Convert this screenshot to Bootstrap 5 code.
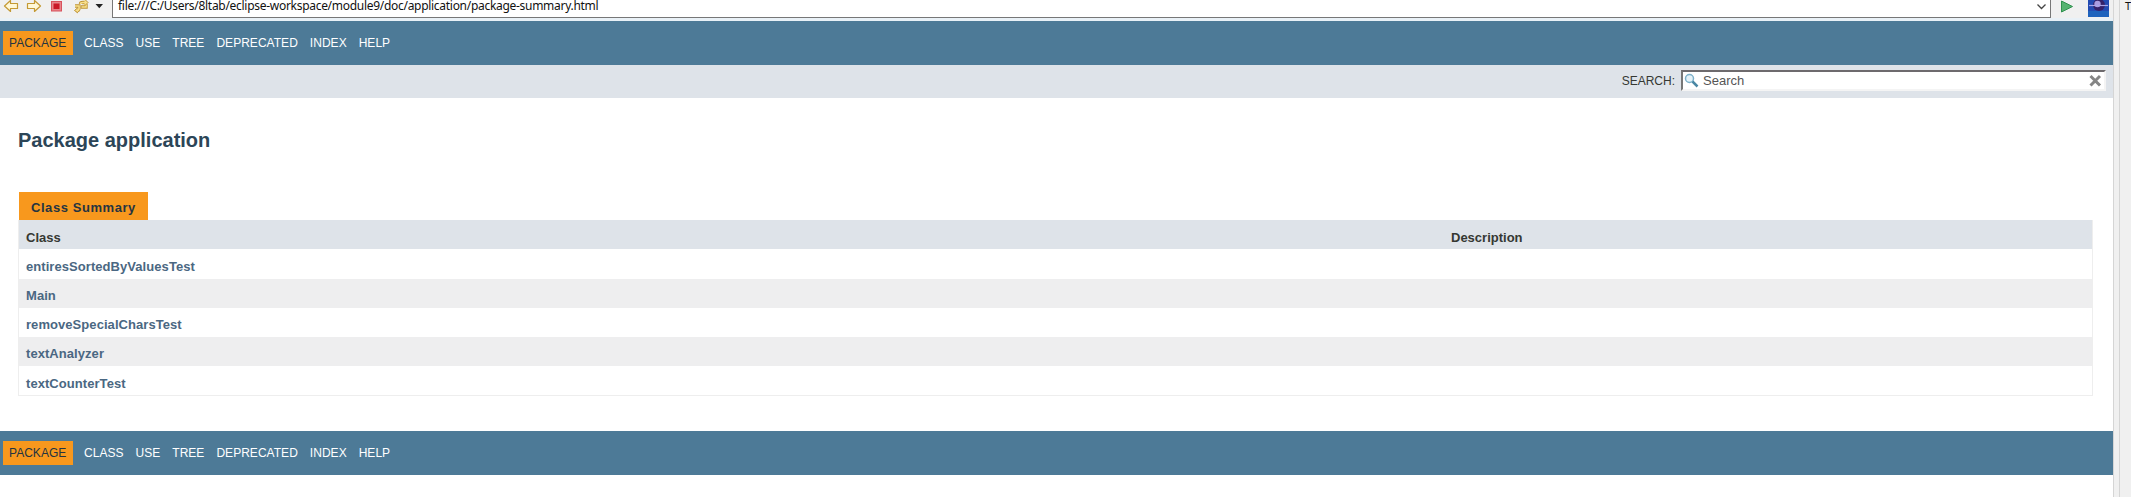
<!DOCTYPE html>
<html lang="en">
<head>
<meta charset="utf-8">
<title>Package application</title>
<link href="https://cdn.jsdelivr.net/npm/bootstrap@5.3.0/dist/css/bootstrap.min.css" rel="stylesheet">
<style>
body{font-family:"Liberation Sans",sans-serif;font-size:13px;line-height:15px;color:#353833;height:497px;overflow:hidden;background:#fff}
.page-col{width:2113px;height:497px}
.toolbar{height:21px;background:#f0f0f0;border-bottom:3px solid #e9f1f7}
.toolbar svg{display:block;flex:none}
.addr{width:1939px;height:18px;margin-left:8px;background:#fff;border:1px solid #777;border-top:0;padding-left:5px;font:12px/12px "Noto Sans",sans-serif;color:#111}
.addr span{letter-spacing:-.245px}
.addr span{letter-spacing:-.29px}
.bar{height:44px;background:#4d7a97;color:#fff;font-size:12px;line-height:14px;padding:10px 0 0 3px}
.bar a{color:#fff;text-decoration:none;padding:5px 0;margin-right:12px;letter-spacing:.03px}
.bar a.current{background:#f8981d;color:#253441;padding:5px 6px;margin-right:11px;width:70px}
.sub{height:33px;background:#dee3e9;font-size:12px;padding:5px 7px 0 0}
.find{width:425px;height:21px;margin-left:6px;background:#fff;border:2px solid #f4f4f4;border-top-color:#6d6a6d;border-left-color:#777;color:#555;font-size:13px}
h1{font-size:20px;line-height:24px;font-weight:700;color:#2c4557;margin:30px 0 0 18px}
.summary{margin:40px 20px 0 18px}
.tab-label{width:129px;height:28px;margin-left:1px;background:#f8981d;color:#253441;font-weight:700;letter-spacing:.56px;padding:8px 0 0 12px}
table.classes{width:2075px;height:176px;border:1px solid #eee;border-top:0;table-layout:fixed;margin:0;border-collapse:separate;border-spacing:0}
.classes th,.classes td{padding:10px 0 0 7px;vertical-align:top;font-weight:700;height:29px;line-height:15px}
.classes th{background:#dee3e9}
.classes .tall td{height:30px}
.classes a{color:#4a6782;text-decoration:none;letter-spacing:.06px}
.classes .alt{background:#eeeeef}
.classes .alt td,.classes .mid td{padding-top:9px}
.side{width:18px;background:#f0f0f0;border-left:1px solid #d5d5d5;overflow:hidden}
.side div{width:12px;height:497px;margin-left:5px;border-left:1px solid #d5d5d5;padding-left:5px;font:11px/12px "Noto Sans",sans-serif;color:#111}
</style>
</head>
<body>
<div class="d-flex">
<main class="page-col flex-shrink-0">
  <div class="toolbar d-flex">
    <svg width="104" height="18" viewBox="0 0 104 18">
      <g fill="#fff8d8" stroke="#c49a35" stroke-width="1.2" stroke-linejoin="round">
        <path d="M4.500 6L10.500 .5V3.500H17.500V8.500H10.500V11.500Z"/>
        <path d="M40.500 6L34.500 .5V3.500H27.500V8.500H34.500V11.500Z"/>
      </g>
      <rect x="51.500" y="1.500" width="10" height="9.500" fill="#e8848a" stroke="#d8525c"/>
      <rect x="53.500" y="3.500" width="6" height="5.500" fill="#c91827"/>
      <g fill="none" stroke="#bf9436" stroke-width="3.400">
        <path d="M86 2.500H83Q80.500 2.500 80.500 4"/><path d="M76 10.500H77.500Q79.500 10 79 6H75"/><path d="M81 7H86V4"/>
      </g>
      <g fill="none" stroke="#f8df8b" stroke-width="1.600">
        <path d="M86 2.500H83Q80.500 2.500 80.500 4"/><path d="M76 10.500H77.500Q79.500 10 79 6H75"/><path d="M81.500 7H86V4"/>
      </g>
      <path d="M84.500 -1L88 2.500L84.500 6M77.500 8L74.500 10.500L78 13" fill="#f8df8b" stroke="#bf9436"/>
      <path d="M95.500 4H103L99.300 8.300Z" fill="#222"/>
    </svg>
    <div class="addr d-flex justify-content-between flex-shrink-0"><span>file:///C:/Users/8ltab/eclipse-workspace/module9/doc/application/package-summary.html</span>
      <svg width="14" height="14" viewBox="0 0 14 14"><path d="M1.500 4.500L5.500 8.500L9.500 4.500" fill="none" stroke="#444" stroke-width="1.300"/></svg>
    </div>
    <svg class="ms-auto" width="62" height="18" viewBox="2051 0 62 18">
      <path d="M2061.500 1L2072.500 6.500L2061.500 12Z" fill="#56b370" stroke="#2f914e"/>
      <path d="M2088 0H2109V17H2088Z" fill="#224bb2"/><path d="M2088 11H2109V17H2088Z" fill="#1e63bd"/>
      <circle cx="2099" cy="5" r="6" fill="#352269"/><circle cx="2097.500" cy="4" r="3.200" fill="#a99ce0"/>
      <path d="M2089 5.500H2108" stroke="#a8a5e9" stroke-width="1.200"/>
    </svg>
  </div>
  <nav class="bar d-flex align-items-start"><a class="current" href="#">PACKAGE</a><a href="#">CLASS</a><a href="#">USE</a><a href="#">TREE</a><a href="#">DEPRECATED</a><a href="#">INDEX</a><a href="#">HELP</a></nav>
  <div class="sub d-flex justify-content-end">
    <span class="pt-1">SEARCH:</span>
    <div class="find d-flex align-items-center">
      <svg width="20" height="17" viewBox="0 0 20 17"><circle cx="6.500" cy="6.500" r="4" fill="#e5f2f8" stroke="#7eb1ca" stroke-width="1.500"/><path d="M9.500 9.500L14.500 14.500" stroke="#4a87a4" stroke-width="2.500"/></svg>
      <span class="flex-grow-1">Search</span>
      <svg width="16" height="17" viewBox="0 0 16 17"><path d="M2.500 4L12 13.500M12 4L2.500 13.500" stroke="#858585" stroke-width="3"/></svg>
    </div>
  </div>
  <h1>Package application</h1>
  <section class="summary">
    <div class="tab-label">Class Summary</div>
    <table class="classes">
      <colgroup><col style="width:1425px"><col></colgroup>
      <thead><tr><th>Class</th><th>Description</th></tr></thead>
      <tbody>
        <tr class="tall"><td><a href="#">entiresSortedByValuesTest</a></td><td></td></tr>
        <tr class="alt"><td><a href="#">Main</a></td><td></td></tr>
        <tr class="mid"><td><a href="#">removeSpecialCharsTest</a></td><td></td></tr>
        <tr class="alt"><td><a href="#">textAnalyzer</a></td><td></td></tr>
        <tr><td><a href="#">textCounterTest</a></td><td></td></tr>
      </tbody>
    </table>
  </section>
  <nav class="bar d-flex align-items-start" style="margin-top:35px"><a class="current" href="#">PACKAGE</a><a href="#">CLASS</a><a href="#">USE</a><a href="#">TREE</a><a href="#">DEPRECATED</a><a href="#">INDEX</a><a href="#">HELP</a></nav>
</main>
<aside class="side flex-shrink-0"><div>T</div></aside>
</div>
<script src="https://cdn.jsdelivr.net/npm/bootstrap@5.3.0/dist/js/bootstrap.bundle.min.js"></script>
</body>
</html>
